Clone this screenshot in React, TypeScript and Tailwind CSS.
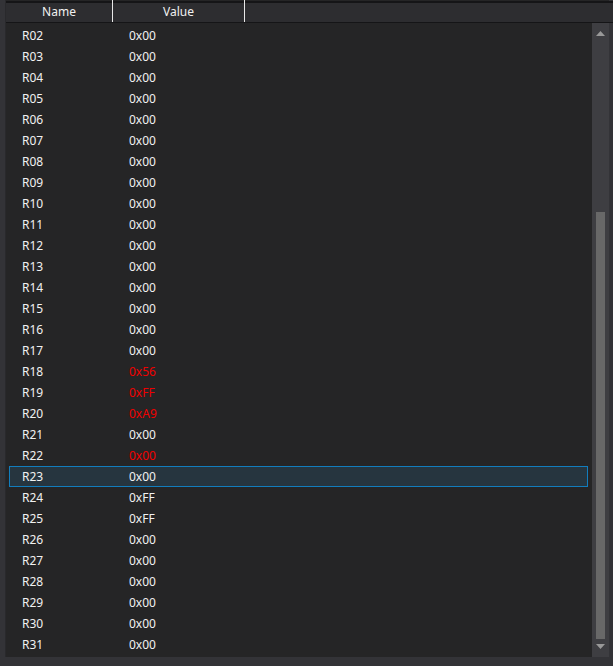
const rows: { name: string; value: string; red?: boolean }[] = [
  { name: 'R02', value: '0x00' },
  { name: 'R03', value: '0x00' },
  { name: 'R04', value: '0x00' },
  { name: 'R05', value: '0x00' },
  { name: 'R06', value: '0x00' },
  { name: 'R07', value: '0x00' },
  { name: 'R08', value: '0x00' },
  { name: 'R09', value: '0x00' },
  { name: 'R10', value: '0x00' },
  { name: 'R11', value: '0x00' },
  { name: 'R12', value: '0x00' },
  { name: 'R13', value: '0x00' },
  { name: 'R14', value: '0x00' },
  { name: 'R15', value: '0x00' },
  { name: 'R16', value: '0x00' },
  { name: 'R17', value: '0x00' },
  { name: 'R18', value: '0x56', red: true },
  { name: 'R19', value: '0xFF', red: true },
  { name: 'R20', value: '0xA9', red: true },
  { name: 'R21', value: '0x00' },
  { name: 'R22', value: '0x00', red: true },
  { name: 'R23', value: '0x00' },
  { name: 'R24', value: '0xFF' },
  { name: 'R25', value: '0xFF' },
  { name: 'R26', value: '0x00' },
  { name: 'R27', value: '0x00' },
  { name: 'R28', value: '0x00' },
  { name: 'R29', value: '0x00' },
  { name: 'R30', value: '0x00' },
  { name: 'R31', value: '0x00' },
];

const selected = 'R23';

export default function App() {
  return (
    <div
      className="w-[613px] h-[666px] bg-[#333337] flex flex-col overflow-hidden text-[12px] text-[#f1f1f1]"
      style={{ fontFamily: '"Segoe UI", "Noto Sans", "Open Sans", sans-serif' }}
    >
      <div className="flex flex-1 min-h-0">
        <div className="w-[5px] shrink-0" />
        <div className="w-px bg-[#29292c] shrink-0" />
        <div className="flex-1 flex flex-col min-w-0 bg-[#252526]">
          {/* Header */}
          <div className="h-[22px] shrink-0 flex bg-[#2d2d30] border-t-2 border-b border-[#151517] mr-[-18px] mt-[1px]">
            <div className="w-[107px] flex items-center justify-center border-r border-[#e8e8e8] mt-[-3px] pt-[1px]">
              Name
            </div>
            <div className="w-[132px] flex items-center justify-center border-r border-[#e8e8e8] mt-[-3px] pt-[1px]">
              Value
            </div>
            <div className="flex-1" />
          </div>

          <div className="flex-1 flex min-h-0">
            {/* Rows */}
            <div className="flex-1 flex flex-col pt-[2px] px-[3px]">
              {rows.map((r) => (
                <div
                  key={r.name}
                  className={`h-[21px] shrink-0 flex items-center ${
                    r.name === selected ? 'bg-[#26353f] border border-[#127dbd]' : 'border border-transparent'
                  }`}
                >
                  <span className="w-[119px] pl-[12px]">{r.name}</span>
                  <span className={r.red ? 'text-[#f00000]' : ''}>{r.value}</span>
                </div>
              ))}
            </div>

            {/* Scrollbar */}
            <div className="w-[17px] shrink-0 bg-[#3e3e42] flex flex-col items-center ml-px">
              <div className="h-[18px] flex items-center justify-center pt-[2px]">
                <svg width="9" height="5" viewBox="0 0 9 5">
                  <path d="M4.5 0 L9 5 L0 5 Z" fill="#999999" />
                </svg>
              </div>
              <div className="flex-1 w-full flex flex-col px-[4px]">
                <div className="h-[171px]" />
                <div className="flex-1 bg-[#686868]" />
              </div>
              <div className="h-[18px] flex items-center justify-center pb-[4px]">
                <svg width="9" height="5" viewBox="0 0 9 5">
                  <path d="M0 0 L9 0 L4.5 5 Z" fill="#999999" />
                </svg>
              </div>
            </div>
          </div>
        </div>
        <div className="w-[4px] shrink-0" />
      </div>
      <div className="h-[9px] shrink-0" />
    </div>
  );
}
